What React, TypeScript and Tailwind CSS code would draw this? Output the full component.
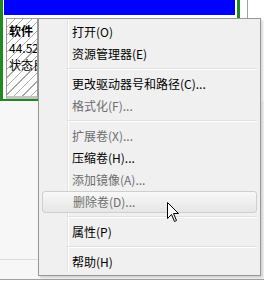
const items: (
  | { type: 'item'; label: string; disabled?: boolean; hover?: boolean }
  | { type: 'sep' }
)[] = [
  { type: 'item', label: '打开(O)' },
  { type: 'item', label: '资源管理器(E)' },
  { type: 'sep' },
  { type: 'item', label: '更改驱动器号和路径(C)...' },
  { type: 'item', label: '格式化(F)...', disabled: true },
  { type: 'sep' },
  { type: 'item', label: '扩展卷(X)...', disabled: true },
  { type: 'item', label: '压缩卷(H)...' },
  { type: 'item', label: '添加镜像(A)...', disabled: true },
  { type: 'item', label: '删除卷(D)...', disabled: true, hover: true },
  { type: 'sep' },
  { type: 'item', label: '属性(P)' },
  { type: 'sep' },
  { type: 'item', label: '帮助(H)' },
];

function ContextMenu() {
  return (
    <div className="absolute left-[38px] top-[18px] w-[223px] border border-[#979797] bg-[#f0f0f0] p-[2px_3px] shadow-[2px_2px_2px_rgba(0,0,0,0.15)]">
      {/* gutter line */}
      <div className="absolute left-[28px] top-[2px] bottom-[2px] w-[2px] border-l border-[#e2e3e3] border-r border-r-white" />
      {items.map((it, i) =>
        it.type === 'sep' ? (
          <div key={i} className="relative h-[8px] pl-[26px] pt-[3px]">
            <div className="h-[2px] border-t border-[#e0e0e0] border-b border-b-white" />
          </div>
        ) : (
          <div
            key={i}
            className={
              'relative flex h-[22px] items-center pl-[30px] text-[12px] ' +
              (it.disabled ? 'text-[#6d6d6d] ' : 'text-black ') +
              (it.hover
                ? 'rounded-[3px] border border-[#cfcfcf] bg-[linear-gradient(#f8f8f8,#e6e6e6)] pl-[29px]'
                : '')
            }
          >
            {it.label}
          </div>
        ),
      )}
    </div>
  );
}

export default function App() {
  return (
    <div className="relative h-[283px] w-[264px] overflow-hidden bg-[#f7f7f7] font-['Noto_Sans_CJK_SC',sans-serif]">
      <div className="flex bg-white">
        <div className="w-[240px] border-x-[3px] border-b-2 border-[#1f8a1f] bg-white pl-px pr-[2px]">
          <div className="h-[15px] bg-[#0000ff]" />
          <div className="pt-[3px] pl-[2px]">
            <div className="h-[81px] w-[32px] overflow-hidden border border-[#9a9a9a] border-b-[3px] border-b-[#c4c4c4] bg-[repeating-linear-gradient(135deg,transparent_0,transparent_5px,#a8a8a8_5px,#a8a8a8_6px)] bg-white pl-[2px] pt-[3px] text-[12px] leading-[17px] whitespace-nowrap text-black">
              <div className="font-bold">软件</div>
              <div>44.52 GB</div>
              <div>状态良好</div>
            </div>
          </div>
        </div>
        <div className="h-[101px] w-[24px] pl-[7px]">
          <div className="h-full border-l border-[#a0a0a0]" />
        </div>
      </div>
      <div className="h-[159px] border-b border-[#dcdcdc] w-[38px]" />
      <div className="mt-[19px] h-[4px] border-t border-[#a0a0a0] bg-white" />
      <ContextMenu />
      <svg className="absolute left-[166px] top-[201px]" width="14" height="22" viewBox="0 0 14 22">
        <path
          d="M1.5 1.5 L1.5 17.5 L5.5 13.5 L8.5 20.5 L10.5 19.5 L7.5 12.5 L12.5 12.5 Z"
          fill="white"
          stroke="black"
          strokeWidth="1"
          strokeLinejoin="miter"
        />
      </svg>
    </div>
  );
}
